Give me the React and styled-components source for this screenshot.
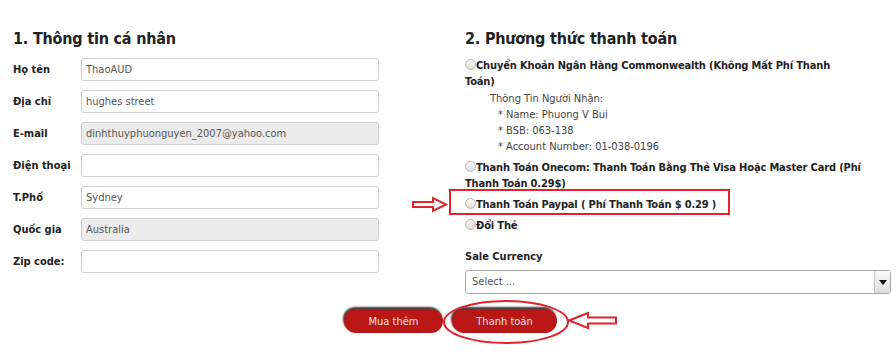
import React from 'react'
import styled, { createGlobalStyle } from 'styled-components'

const GlobalStyle = createGlobalStyle`
    body{
        margin: 0;
        background: #fff;
        font-family: "DejaVu Sans Condensed", "DejaVu Sans", sans-serif;
        font-stretch: condensed;
        color: #222;
    }
`

const Page = styled.div`
    position: relative;
    width: 896px;
    height: 352px;
    padding: 29px 0 0 13px;
    box-sizing: border-box;
`

const Columns = styled.div`
    display: grid;
    grid-template-columns: 366px 426px;
    column-gap: 86px;
`

const Title = styled.h2`
    margin: 0 0 9px;
    font-size: 16px;
    letter-spacing: -0.2px;
    line-height: 20px;
    font-weight: bold;
    color: #222;
`

const Form = styled.div`
    display: flex;
    flex-direction: column;
    gap: 9px;
`

const Row = styled.div`
    display: flex;
    align-items: center;
`

const Label = styled.label`
    width: 68px;
    font-size: 11px;
    font-weight: bold;
`

const Input = styled.div`
    width: 298px;
    height: 23px;
    box-sizing: border-box;
    border: 1px solid #cfcfcf;
    border-radius: 3px;
    background: ${p => p.disabled ? '#ebebeb' : '#fff'};
    font-size: 11px;
    line-height: 21px;
    padding: 0 4px;
    color: #555;
`

const Options = styled.div`
    display: flex;
    flex-direction: column;
    gap: 5px;
    margin-top: 4px;
`

const Option = styled.div`
    position: relative;
    width: ${p => p.narrow ? '375px' : '400px'};
    font-size: 11px;
    letter-spacing: -0.15px;
    font-weight: bold;
    line-height: 16px;
`

const Radio = styled.span`
    display: inline-block;
    width: 9px;
    height: 9px;
    border: 1px solid #b5b5b5;
    border-radius: 50%;
    background: linear-gradient(#fbfbfb, #dedede);
    vertical-align: -1px;
`

const Highlight = styled.div`
    position: absolute;
    left: -16px;
    top: -8px;
    width: 281px;
    height: 26px;
    border: 2px solid #e3232b;
    box-sizing: border-box;
`

const Details = styled.div`
    padding-left: 25px;
    font-size: 11px;
    line-height: 16px;
    color: #444;
    margin-top: 1px;
    div + div{
        padding-left: 8px;
    }
`

const SubLabel = styled.div`
    margin-top: 15px;
    font-size: 11px;
    font-weight: bold;
    line-height: 16px;
`

const Select = styled.div`
    margin-top: 5px;
    display: flex;
    height: 24px;
    box-sizing: border-box;
    border: 1px solid #a9a9a9;
    border-radius: 3px;
    font-size: 11px;
    color: #555;
    span{
        flex: 1;
        line-height: 22px;
        padding-left: 6px;
    }
`

const SelectArrow = styled.div`
    width: 15px;
    border-left: 1px solid #c8c8c8;
    background: linear-gradient(#fafafa, #dcdcdc);
    display: flex;
    align-items: center;
    justify-content: center;
    &:after{
        content: '';
        border-left: 4px solid transparent;
        border-right: 4px solid transparent;
        border-top: 5px solid #111;
    }
`

const Buttons = styled.div`
    display: flex;
    justify-content: center;
    gap: 9px;
    margin: 15px 8px 0 0;
`

const Button = styled.button`
    width: ${p => p.w}px;
    height: 24px;
    border: none;
    border-radius: 12px;
    background: #ba1717;
    box-shadow: -1px -2px 2px #3a3a3a;
    color: #f3e4e4;
    font-family: inherit;
    font-stretch: condensed;
    font-size: 11px;
    padding: 0;
`

const Mark = styled.svg`
    position: absolute;
    overflow: visible;
    pointer-events: none;
`

const App = () => {
    return (
        <>
            <GlobalStyle />
            <Page>
                <Columns>
                    <div>
                        <Title>1. Thông tin cá nhân</Title>
                        <Form>
                            <Row><Label>Họ tên</Label><Input>ThaoAUD</Input></Row>
                            <Row><Label>Địa chỉ</Label><Input>hughes street</Input></Row>
                            <Row><Label>E-mail</Label><Input disabled>dinhthuyphuonguyen_2007@yahoo.com</Input></Row>
                            <Row><Label>Điện thoại</Label><Input /></Row>
                            <Row><Label>T.Phố</Label><Input>Sydney</Input></Row>
                            <Row><Label>Quốc gia</Label><Input disabled>Australia</Input></Row>
                            <Row><Label>Zip code:</Label><Input /></Row>
                        </Form>
                    </div>
                    <div>
                        <Title>2. Phương thức thanh toán</Title>
                        <Options>
                            <div>
                                <Option narrow><Radio />Chuyển Khoản Ngân Hàng Commonwealth (Không Mất Phí Thanh Toán)</Option>
                                <Details>
                                    <div>Thông Tin Người Nhận:</div>
                                    <div>* Name: Phuong V Bui</div>
                                    <div>* BSB: 063-138</div>
                                    <div>* Account Number: 01-038-0196</div>
                                </Details>
                            </div>
                            <Option><Radio />Thanh Toán Onecom: Thanh Toán Bằng Thẻ Visa Hoặc Master Card (Phí Thanh Toán 0.29$)</Option>
                            <Option>
                                <Radio />Thanh Toán Paypal ( Phí Thanh Toán $ 0.29 )
                                <Highlight />
                            </Option>
                            <Option><Radio />Đổi Thẻ</Option>
                        </Options>
                        <SubLabel>Sale Currency</SubLabel>
                        <Select><span>Select ...</span><SelectArrow /></Select>
                    </div>
                </Columns>
                <Buttons>
                    <Button w={99}>Mua thêm</Button>
                    <Button w={105}>Thanh toán</Button>
                </Buttons>

                <Mark style={{ left: 412, top: 197 }} width="35" height="15" viewBox="0 0 35 15">
                    <path d="M1 5 H21 V1 L34 7.5 L21 14 V10 H1 Z" fill="none" stroke="#e3232b" strokeWidth="2" />
                </Mark>
                <Mark style={{ left: 443, top: 300 }} width="126" height="44" viewBox="0 0 126 44">
                    <ellipse cx="63" cy="22" rx="62" ry="21" fill="none" stroke="#e3232b" strokeWidth="2" />
                </Mark>
                <Mark style={{ left: 568, top: 312 }} width="50" height="17" viewBox="0 0 50 17">
                    <path d="M1 8.5 L20 1 V5.5 H48 V11.5 H20 V16 Z" fill="none" stroke="#e3232b" strokeWidth="2" />
                </Mark>
            </Page>
        </>
    )
}

export default App
